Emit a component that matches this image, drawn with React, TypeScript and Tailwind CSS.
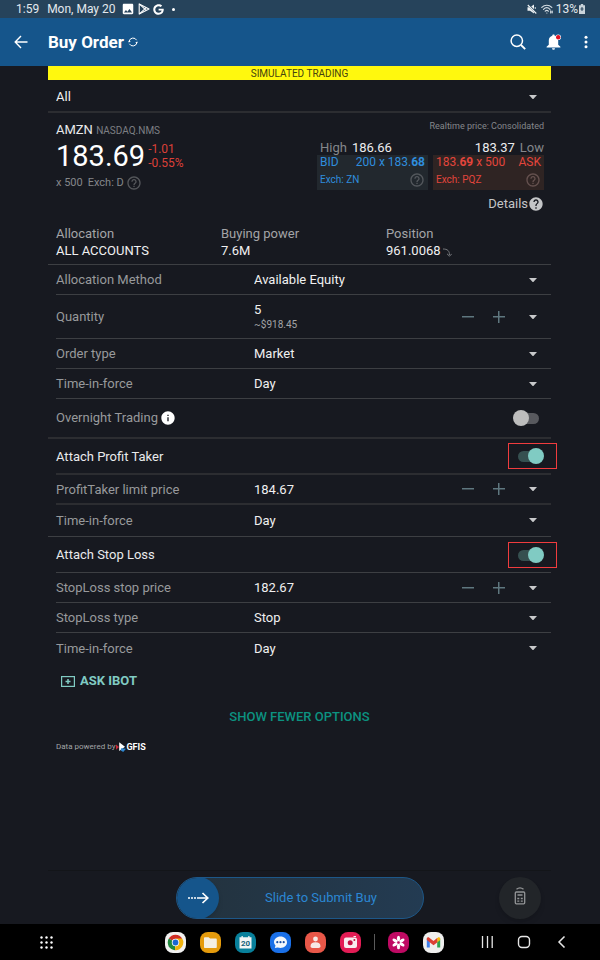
import { useState, type ReactNode } from 'react';
import { MdHelpOutline, MdHelp, MdInfo, MdImage } from 'react-icons/md';
import { FaGoogle } from 'react-icons/fa';

function Caret() {
  return (
    <svg width="8" height="4" viewBox="0 0 8 4" fill="#c8c9cb" aria-hidden="true">
      <path d="M0 0h8L4.6 3.7a1 1 0 0 1-1.2 0z" />
    </svg>
  );
}

function StatusBar() {
  return (
    <div className="flex h-[18px] items-center bg-[#26435b] pr-[15px] pl-4 text-xs leading-4 text-[#e3e9ee]">
      <span>1:59</span>
      <span className="ml-2">Mon, May 20</span>
      <MdImage className="ml-[6px] size-[14px] text-white" />
      <svg className="ml-[3px]" width="12" height="12" viewBox="0 0 12 12" fill="none" stroke="#fff" strokeWidth="1.1" strokeLinejoin="round" aria-hidden="true">
        <path d="M1.2.9 11 6l-9.8 5.1z" />
        <path d="M1.5 1.2 8.2 7.4M1.5 10.8l6.7-6.2" />
      </svg>
      <FaGoogle className="ml-[3px] size-[11px] text-white" />
      <span className="ml-2 size-[3px] rounded-full bg-white" />
      <svg className="ml-auto" width="10" height="10" viewBox="0 0 10 10" aria-hidden="true">
        <path d="M.5 3.200h2.500L7 .5v9L3 6.800H.5z" fill="#eef2f4" />
        <path d="M.8.500 9.500 9.200" stroke="#26435b" strokeWidth="2.200" />
        <path d="m.8 1 8.500 8.500M8.300 3.200v1.600" stroke="#eef2f4" strokeWidth="1.100" />
      </svg>
      <svg className="ml-1" width="12" height="10" viewBox="0 0 12 10" fill="none" stroke="#d5dde3" strokeWidth="1.2" strokeLinecap="round" aria-hidden="true">
        <path d="M.8 3.4C3.600.5 8 .5 10.800 3.400" />
        <path d="M2.500 5.300c1.900-1.900 4.600-1.900 6.500 0" />
        <path d="M4.200 7.200c1-1 2.200-1 3.200 0" />
        <path d="M5.800 9h.1M9.700 6.800v2.200M11.200 7.200v1.600" />
      </svg>
      <span className="ml-[3px]">13%</span>
      <svg className="ml-px" width="6" height="10" viewBox="0 0 6 10" aria-hidden="true">
        <path d="M1.800 0h2.400v1.200H6V10H0V1.200h1.800z" fill="#c9d3da" />
        <path d="M3 3v4M1.500 5h3" stroke="#26435b" />
      </svg>
    </div>
  );
}

function Header() {
  return (
    <header className="flex h-12 items-center bg-[#15558b] pr-3 pl-[14px] text-white">
      <button aria-label="Back">
        <svg width="14" height="14" viewBox="0 0 14 14" fill="none" stroke="currentColor" strokeWidth="1.400" aria-hidden="true">
          <path d="M13.500 7H1.200M7 1 1.200 7 7 13" />
        </svg>
      </button>
      <h1 className="ml-5 text-[17px] leading-6 font-bold">Buy Order</h1>
      <button aria-label="Refresh" className="ml-1">
        <svg width="10" height="10" viewBox="0 0 10 10" fill="none" stroke="currentColor" aria-hidden="true">
          <path d="M1.200 4A4 4 0 0 1 8.600 3.200M8.800 6A4 4 0 0 1 1.400 6.800" />
          <path d="M0 5.200 1.200 3.300 2.700 4.900zM10 4.800 8.800 6.700 7.300 5.100z" fill="currentColor" stroke="none" />
        </svg>
      </button>
      <button aria-label="Search" className="ml-auto">
        <svg width="16" height="16" viewBox="0 0 16 16" fill="none" stroke="currentColor" strokeWidth="1.500" aria-hidden="true">
          <circle cx="6.800" cy="6.800" r="5.700" />
          <path d="m11 11 4.200 4.200" strokeWidth="1.800" />
        </svg>
      </button>
      <button aria-label="Notifications" className="ml-5">
        <svg width="16" height="16" viewBox="0 0 16 16" aria-hidden="true">
          <path d="M7.500.6c.8 0 1.200.5 1.200 1.200 2.200.6 3.500 2.500 3.500 4.700v4.300l2.200 2v.7H.6v-.7l2.200-2V6.500c0-2.200 1.300-4.100 3.500-4.700 0-.7.400-1.200 1.200-1.200zM6 14.300h3a1.500 1.500 0 0 1-3 0z" fill="#fff" />
          <circle cx="12.200" cy="3.200" r="2.800" fill="#fff" />
          <circle cx="12.200" cy="3.200" r="2.200" fill="#e01022" />
        </svg>
      </button>
      <button aria-label="More options" className="ml-[22px]">
        <svg width="4" height="14" viewBox="0 0 4 14" fill="currentColor" aria-hidden="true">
          <circle cx="2" cy="2.200" r="1.500" />
          <circle cx="2" cy="7" r="1.500" />
          <circle cx="2" cy="11.800" r="1.500" />
        </svg>
      </button>
    </header>
  );
}

function Quote() {
  return (
    <section className="flex justify-between pt-[7px] pr-[7px] pl-2">
      <div>
        <p className="mt-[2px] text-[13px] leading-4 text-[#e9eaec]">
          AMZN <span className="text-[10px] text-[#7d7f83]">NASDAQ.NMS</span>
        </p>
        <div className="mt-px flex items-center gap-[3px]">
          <span className="text-[29px] leading-8 text-white">183.69</span>
          <div className="text-xs leading-[14px] text-[#dc4038]">
            <p>-1.01</p>
            <p>-0.55%</p>
          </div>
        </div>
        <p className="mt-[3px] flex items-center text-[11px] leading-4 text-[#85878b]">
          x 500
          <span className="ml-[5px]">Exch: D</span>
          <MdHelpOutline className="ml-[2px] size-4 text-[#55575b]" />
        </p>
      </div>
      <div className="w-[227px] text-[13px] leading-4">
        <p className="text-right text-[9px] leading-3 text-[#85878b]">Realtime price: Consolidated</p>
        <div className="mt-2 flex justify-between pl-[3px] leading-[15px] text-[#ececee]">
          <span>
            <span className="mr-[5px] text-[#85878b]">High</span>186.66
          </span>
          <span>
            183.37<span className="ml-[5px] text-[#85878b]">Low</span>
          </span>
        </div>
        <div className="grid grid-cols-2 gap-[5px] text-xs">
          <div className="h-[35px] bg-[#22282e] px-[3px] text-[#2f8ddd]">
            <div className="flex justify-between leading-[15px]">
              <span>BID</span>
              <span>
                200 x 183.<b>68</b>
              </span>
            </div>
            <div className="flex items-center justify-between pt-[2px] text-[10px]">
              <span>Exch: ZN</span>
              <MdHelpOutline className="size-4 text-[#54585d]" />
            </div>
          </div>
          <div className="h-[35px] bg-[#2f2423] px-[3px] text-[#e3453c]">
            <div className="flex justify-between leading-[15px]">
              <span>
                183.<b>69</b> x 500
              </span>
              <span>ASK</span>
            </div>
            <div className="flex items-center justify-between pt-[2px] text-[10px]">
              <span>Exch: PQZ</span>
              <MdHelpOutline className="size-4 text-[#65514f]" />
            </div>
          </div>
        </div>
        <button className="mt-[6px] ml-auto flex items-center text-[#c4c5c7]">
          Details <MdHelp className="size-4" />
        </button>
      </div>
    </section>
  );
}

function Account() {
  return (
    <dl className="grid grid-cols-3 border-b border-[#3d3f43] pt-[13px] pb-[5px] pl-2 text-[13px] leading-[17px]">
      <div>
        <dt className="text-[#a3a4a7]">Allocation</dt>
        <dd className="text-[#f0f0f1]">ALL ACCOUNTS</dd>
      </div>
      <div>
        <dt className="text-[#a3a4a7]">Buying power</dt>
        <dd className="text-[#f0f0f1]">7.6M</dd>
      </div>
      <div>
        <dt className="text-[#a3a4a7]">Position</dt>
        <dd className="flex items-center gap-[2px] text-[#f0f0f1]">
          961.0068
          <svg className="mt-1" width="9" height="9" viewBox="0 0 9 9" fill="none" stroke="#77797d" aria-hidden="true">
            <path d="M0 1c4.500 0 6.500 1.800 6.500 6M4 5.800l2.500 2.400L8.800 5.800" />
          </svg>
        </dd>
      </div>
    </dl>
  );
}

const thin = 'border-b border-[#3d3f43]';
const thick = 'border-b-2 border-[#2c2d31]';

function SelectRow({ id, label, options, line = thin }: { id: string; label: string; options: string[]; line?: string }) {
  return (
    <div className={`ml-2 flex h-[30px] items-center ${line}`}>
      <label htmlFor={id} className="w-2/5 pt-px text-[#98999c]">
        {label}
      </label>
      <div className="relative flex flex-1 items-center">
        <select id={id} className="w-full appearance-none bg-transparent pt-px text-[#f0f0f1]">
          {options.map((o) => (
            <option key={o}>{o}</option>
          ))}
        </select>
        <span className="pointer-events-none absolute right-[14px]">
          <Caret />
        </span>
      </div>
    </div>
  );
}

function StepperRow({ id, label, initial, step, note, line = thin, height = 'h-[30px]' }: { id: string; label: string; initial: string; step: number; note?: string; line?: string; height?: string }) {
  const [value, setValue] = useState(initial);
  const bump = (d: number) => setValue((v) => String(Math.round((Number(v) + d) * 100) / 100));
  return (
    <div className={`ml-2 flex items-center ${height} ${line}`}>
      <label htmlFor={id} className="w-2/5 pt-px text-[#98999c]">
        {label}
      </label>
      <div className="min-w-0 flex-1 pt-px">
        <input id={id} value={value} onChange={(e) => setValue(e.target.value)} className="block h-4 w-full bg-transparent text-[#f0f0f1]" />
        {note && <p className="text-[10px] leading-[14px] text-[#a3a4a7]">{note}</p>}
      </div>
      <button aria-label={`Decrease ${label}`} onClick={() => bump(-step)} className="text-[#5f777f]">
        <svg width="12" height="12" viewBox="0 0 12 12" stroke="currentColor" strokeWidth="1.500" aria-hidden="true">
          <path d="M0 5.750h12" />
        </svg>
      </button>
      <button aria-label={`Increase ${label}`} onClick={() => bump(step)} className="ml-[19px] text-[#5f777f]">
        <svg width="12" height="12" viewBox="0 0 12 12" stroke="currentColor" strokeWidth="1.500" aria-hidden="true">
          <path d="M0 5.750h12M5.750 0v12" />
        </svg>
      </button>
      <button aria-label={`${label} choices`} className="mr-[14px] ml-6">
        <Caret />
      </button>
    </div>
  );
}

function Switch({ id, on }: { id: string; on: boolean }) {
  return (
    <input
      id={id}
      type="checkbox"
      role="switch"
      defaultChecked={on}
      className="relative block h-4 w-[26px] appearance-none before:absolute before:top-[3px] before:left-px before:h-[11px] before:w-[25px] before:rounded-full before:bg-[#58595e] after:absolute after:top-0 after:left-0 after:size-4 after:rounded-full after:bg-[#bdbdbd] checked:before:left-0 checked:before:bg-[#365050] checked:after:left-[10px] checked:after:bg-[#80cbc3]"
    />
  );
}

function AttachRow({ id, label, line }: { id: string; label: string; line: string }) {
  return (
    <div className={`ml-2 flex h-9 items-center justify-between pr-[7px] ${line}`}>
      <label htmlFor={id} className="pt-px text-[#e9eaec]">
        {label}
      </label>
      <div className="relative">
        <Switch id={id} on />
        <span className="pointer-events-none absolute -inset-y-[5px] -right-[13px] -left-[10px] border border-[#f03c3e]" />
      </div>
    </div>
  );
}

function SubmitBar() {
  return (
    <footer className="mr-[49px] ml-12 grid h-[54px] grid-cols-[1fr_auto_1fr] items-center border-t border-[#131519]">
      <label className="relative col-start-2 block h-[42px] w-[248px]">
        <input
          type="range"
          aria-label="Slide to Submit Buy"
          defaultValue={0}
          className="block h-full w-full appearance-none overflow-hidden rounded-full border border-[#1d5788] bg-linear-to-r from-[#23323d] to-[#233b52] [&::-webkit-slider-thumb]:size-[42px] [&::-webkit-slider-thumb]:appearance-none [&::-webkit-slider-thumb]:rounded-full [&::-webkit-slider-thumb]:bg-[#15558b] [&::-webkit-slider-thumb]:shadow-md"
        />
        <span className="pointer-events-none absolute inset-0 flex items-center pl-3">
          <svg width="21" height="12" viewBox="0 0 21 12" fill="none" stroke="#fff" aria-hidden="true">
            <path d="M0 6h9" strokeWidth="1.500" strokeDasharray="2 1" />
            <path d="M9 6h11M14.500 1l5.300 5-5.300 5" strokeWidth="1.700" />
          </svg>
          <span className="flex-1 pl-[10px] text-center text-[13px] text-[#2b87d3]">Slide to Submit Buy</span>
        </span>
      </label>
      <button aria-label="Calculator" className="mr-[10px] flex size-[42px] items-center justify-center justify-self-end rounded-full bg-[#222529] shadow-md">
        <svg className="-mt-1" width="12" height="18" viewBox="0 0 12 18" fill="none" stroke="#939597" strokeWidth="1.300" aria-hidden="true">
          <path d="M2.500 2.300c2-1.700 5-1.700 7 0" />
          <rect x="1.300" y="5" width="9.400" height="11.800" rx="1" />
          <path d="M3.500 8h5" strokeWidth="1.500" />
          <path d="M3.300 11.500h2M6.800 11.500h2M3.300 14.200h2M6.800 14.200h2" />
        </svg>
      </button>
    </footer>
  );
}

function AppIcon({ name, bg, children }: { name: string; bg: string; children: ReactNode }) {
  return (
    <button aria-label={name} className={`size-[21px] overflow-hidden rounded-[8px] ${bg}`}>
      <svg width="21" height="21" viewBox="0 0 21 21" aria-hidden="true">
        {children}
      </svg>
    </button>
  );
}

function NavBar() {
  return (
    <nav className="grid h-9 grid-cols-[1fr_auto_1fr] items-center bg-black pr-[31px] pl-10">
      <button aria-label="All apps" className="justify-self-start">
        <svg width="13" height="13" viewBox="0 0 13 13" fill="#fff" aria-hidden="true">
          {[1.5, 6.5, 11.5].map((y) => [1.5, 6.5, 11.5].map((x) => <circle key={`${x}-${y}`} cx={x} cy={y} r="1.200" />))}
        </svg>
      </button>
      <div className="flex items-center gap-[13px]">
        <div className="flex items-center gap-[14px]">
          <AppIcon name="Chrome" bg="bg-[#f1f1f0]">
            <path d="M10.500 10.500 3.800 6.600a7.700 7.700 0 0 1 13.400 0z" fill="#cf2d25" />
            <path d="M10.500 10.500 3.800 6.600a7.700 7.700 0 0 0 6.200 11.600z" fill="#20883c" />
            <path d="M10.500 10.500 10 18.200A7.700 7.700 0 0 0 17.200 6.600h-6.700z" fill="#efb20e" />
            <circle cx="10.500" cy="10.500" r="3.700" fill="#fff" />
            <circle cx="10.500" cy="10.500" r="2.900" fill="#1967d2" />
          </AppIcon>
          <AppIcon name="Files" bg="bg-[#e59b0c]">
            <path d="M4 6.300c0-.7.400-1.100 1.100-1.100h3.500l1.500 1.400h5.600c.7 0 1.100.4 1.100 1.100v7.200c0 .7-.4 1.100-1.100 1.100H5.100c-.7 0-1.100-.4-1.100-1.100z" fill="#f4efe3" />
          </AppIcon>
          <AppIcon name="Calendar" bg="bg-[#08809b]">
            <path d="M4.500 5.200h2V4h1.300v1.200h5.400V4h1.300v1.200h2v11.300h-12z" fill="#f2f5f5" />
            <text x="10.500" y="14" textAnchor="middle" fontSize="8" fontWeight="700" fill="#13617a">20</text>
          </AppIcon>
          <AppIcon name="Messages" bg="bg-[#1a70e8]">
            <path d="M10.500 4.500c3.700 0 6.500 2.500 6.500 5.700s-2.800 5.700-6.500 5.700c-1 0-2-.2-2.800-.5L4.800 16l.7-2.500A5.300 5.300 0 0 1 4 10.200c0-3.200 2.800-5.700 6.500-5.700z" fill="#f4f7fb" />
            <g fill="#174ea6">
              <circle cx="7.300" cy="10.200" r="1.100" />
              <circle cx="10.500" cy="10.200" r="1.100" />
              <circle cx="13.700" cy="10.200" r="1.100" />
            </g>
          </AppIcon>
          <AppIcon name="Contacts" bg="bg-[#e85748]">
            <circle cx="10.500" cy="7" r="2.400" fill="#f6e9e5" />
            <path d="M5.500 14.200c0-2.600 1.800-3.900 5-3.900s5 1.300 5 3.900c0 1.300-.8 1.700-2 1.700h-6c-1.200 0-2-.4-2-1.700z" fill="#f6e9e5" />
          </AppIcon>
          <AppIcon name="Camera" bg="bg-[#e31c55]">
            <rect x="4" y="5.500" width="13" height="10.500" rx="2" fill="#f8edf0" />
            <circle cx="10.200" cy="10.800" r="2.500" fill="#c40f43" />
            <circle cx="14.400" cy="8" r="1" fill="#c40f43" />
            <path d="M13.500 4.500h2.500" stroke="#f8edf0" />
          </AppIcon>
        </div>
        <span className="h-4 w-px bg-[#5a5a5a]" />
        <div className="flex items-center gap-[14px]">
          <AppIcon name="Gallery" bg="bg-[#bf0a63]">
            <g fill="#fff">
              {[0, 60, 120, 180, 240, 300].map((a) => (
                <ellipse key={a} cx="10.500" cy="6.600" rx="1.600" ry="2.900" transform={`rotate(${a} 10.500 10.500)`} />
              ))}
            </g>
            <circle cx="10.500" cy="10.500" r="1.100" fill="#bf0a63" />
          </AppIcon>
          <AppIcon name="Gmail" bg="bg-[#efefee]">
            <path d="M3.800 6.500v9h3V9z" fill="#3f7fea" />
            <path d="M17.200 6.500v9h-3V9z" fill="#2fa34f" />
            <path d="M14.200 6.200v4.200l3-2.300V6.800c0-1.400-1.500-1.900-2.500-1.100z" fill="#f5b90e" />
            <path d="M3.800 8.100V6.800c0-1.400 1.500-1.900 2.500-1.100l4.200 3.300 3.700-2.900v4.300l-3.700 2.900z" fill="#dc4034" />
          </AppIcon>
        </div>
      </div>
      <div className="flex items-center gap-6 justify-self-end text-[#e6e6e6]">
        <button aria-label="Recent apps">
          <svg width="12" height="12" viewBox="0 0 12 12" stroke="currentColor" strokeWidth="1.300" aria-hidden="true">
            <path d="M1.500 0v12M6.500 0v12M11.200 0v12" />
          </svg>
        </button>
        <button aria-label="Home">
          <svg width="14" height="14" viewBox="0 0 14 14" fill="none" stroke="currentColor" strokeWidth="1.400" aria-hidden="true">
            <rect x="1.500" y="1.500" width="11" height="11" rx="3.500" />
          </svg>
        </button>
        <button aria-label="Back" className="mr-[2px]">
          <svg width="12" height="12" viewBox="0 0 12 12" fill="none" stroke="currentColor" strokeWidth="1.500" aria-hidden="true">
            <path d="M9.500.5 4 6l5.500 5.500" />
          </svg>
        </button>
      </div>
    </nav>
  );
}

export default function App() {
  return (
    <div className="flex min-h-screen flex-col bg-[#171920] font-['Roboto','Noto_Sans',sans-serif]">
      <StatusBar />
      <Header />
      <main className="mr-[49px] ml-12 flex-1 text-[13px] leading-4">
        <p className="h-[14px] bg-[#fff80e] text-center text-[10px] leading-[15px] text-[#45430f]">SIMULATED TRADING</p>
        <div className="relative flex h-[33px] items-center border-b-2 border-[#2c2d31] pt-[3px]">
          <select aria-label="Account" className="w-full appearance-none bg-transparent pl-2 text-[#f0f0f1]">
            <option>All</option>
          </select>
          <span className="pointer-events-none absolute right-[14px]">
            <Caret />
          </span>
        </div>
        <Quote />
        <Account />
        <form onSubmit={(e) => e.preventDefault()}>
          <SelectRow id="method" label="Allocation Method" options={['Available Equity', 'Net Liquidation', 'Equal Quantity']} />
          <StepperRow id="quantity" label="Quantity" initial="5" step={1} note="~$918.45" height="h-11" />
          <SelectRow id="type" label="Order type" options={['Market', 'Limit', 'Stop']} />
          <SelectRow id="tif" label="Time-in-force" options={['Day', 'GTC']} />
          <div className="flex h-10 items-center border-b-2 border-[#2c2d31] pr-3 pl-2">
            <label htmlFor="overnight" className="text-[#98999c]">
              Overnight Trading
            </label>
            <MdInfo className="mr-auto ml-[2px] size-4 text-white" />
            <Switch id="overnight" on={false} />
          </div>
          <AttachRow id="profit" label="Attach Profit Taker" line={thick} />
          <StepperRow id="profit-price" label="ProfitTaker limit price" initial="184.67" step={0.01} line={thick} />
          <div className="border-b border-[#3d3f43] pb-px">
            <SelectRow id="profit-tif" label="Time-in-force" options={['Day', 'GTC']} line="" />
          </div>
          <AttachRow id="stop" label="Attach Stop Loss" line={thin} />
          <StepperRow id="stop-price" label="StopLoss stop price" initial="182.67" step={0.01} />
          <SelectRow id="stop-type" label="StopLoss type" options={['Stop', 'Stop Limit']} />
          <SelectRow id="stop-tif" label="Time-in-force" options={['Day', 'GTC']} line="" />
        </form>
        <button className="mt-[10px] ml-[13px] flex items-center gap-[5px] font-bold text-[#80cbc3]">
          <svg width="14" height="11" viewBox="0 0 14 11" fill="none" stroke="currentColor" strokeWidth="1.200" aria-hidden="true">
            <rect x=".6" y=".6" width="12.800" height="9.800" />
            <path d="M7 3v5M4.500 5.500h5" strokeWidth="1.500" />
          </svg>
          ASK IBOT
        </button>
        <button className="mx-auto mt-5 block font-medium text-[#0c9280]">SHOW FEWER OPTIONS</button>
        <p className="mt-[14px] flex items-center pl-2 text-[8px] text-[#a3a4a7]">
          Data powered by
          <svg className="ml-px" width="10" height="10" viewBox="0 0 10 10" aria-hidden="true">
            <path d="M0 2.500 3 5 0 7.800z" fill="#c6283a" />
            <path d="M3.200.2 9 4.800 3.200 9z" fill="#fff" />
            <path d="m5 6.200 5 .6-2.800 3.200L4.800 8.500z" fill="#2f86cf" />
          </svg>
          <b className="text-[9px] text-white">GFIS</b>
        </p>
      </main>
      <SubmitBar />
      <NavBar />
    </div>
  );
}
